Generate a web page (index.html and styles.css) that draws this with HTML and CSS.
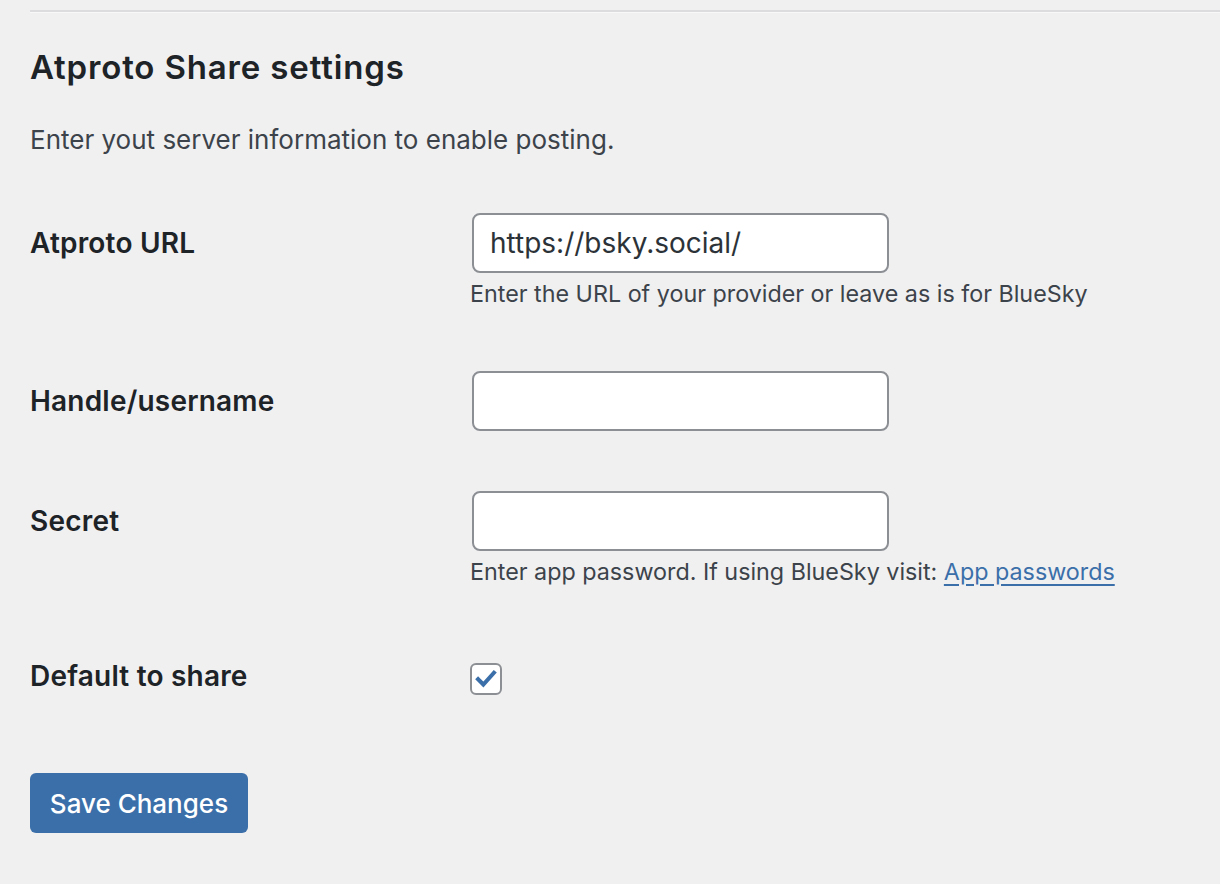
FILE: index.html
```html
<!DOCTYPE html>
<html lang="en">
<head>
<meta charset="utf-8">
<title>Atproto Share settings</title>
<link rel="stylesheet" href="styles.css">
</head>
<body>
<div class="wrap">
  <div class="rule"></div>
  <h2 class="title">Atproto Share settings</h2>
  <p class="intro">Enter yout server information to enable posting.</p>
  <form class="settings">
    <div class="row row-url">
      <label class="row-label" for="url">Atproto URL</label>
      <div class="row-field">
        <input class="text-input" id="url" type="text" value="https://bsky.social/">
        <p class="description">Enter the URL of your provider or leave as is for BlueSky</p>
      </div>
    </div>
    <div class="row row-handle">
      <label class="row-label" for="handle">Handle/username</label>
      <div class="row-field">
        <input class="text-input" id="handle" type="text" value="">
      </div>
    </div>
    <div class="row row-secret">
      <label class="row-label" for="secret">Secret</label>
      <div class="row-field">
        <input class="text-input" id="secret" type="password" value="">
        <p class="description">Enter app password. If using BlueSky visit: <a class="link" href="#">App passwords</a></p>
      </div>
    </div>
    <div class="row row-share">
      <label class="row-label row-label-check" for="share">Default to share</label>
      <div class="row-field">
        <span class="checkbox" id="share" role="checkbox" aria-checked="true">
          <svg viewBox="0 0 20 20" width="24" height="24" aria-hidden="true"><path d="M3.4 10.2 L7.8 14.6 L16.6 4.8" fill="none" stroke="#3b6fa9" stroke-width="3.4" stroke-linecap="square" stroke-linejoin="miter"/></svg>
        </span>
      </div>
    </div>
    <div class="submit-row">
      <button class="button-primary" type="button">Save Changes</button>
    </div>
  </form>
</div>
</body>
</html>
```

FILE: styles.css
```css
html, body {
  margin: 0;
  padding: 0;
  background: #f0f0f1;
}
body {
  font-family: Inter, "Noto Sans", "Liberation Sans", sans-serif;
  color: #3c434a;
}
.wrap {
  padding-left: 30px;
  padding-top: 10px;
}
.rule {
  height: 2px;
  background: #dcdcde;
  border-bottom: 1px solid #f8f8f8;
}
.title {
  margin: 34px 0 0;
  font-size: 33px;
  line-height: 40px;
  letter-spacing: 0.85px;
  font-weight: 600;
  color: #1d2327;
}
.intro {
  margin: 33px 0 0;
  font-size: 26px;
  line-height: 39px;
  color: #3c434a;
}
.settings {
  margin-top: 54px;
}
.row {
  display: flex;
  align-items: flex-start;
}
.row-label {
  width: 440px;
  flex: none;
  padding-top: 10px;
  font-size: 28px;
  line-height: 40px;
  letter-spacing: 0.2px;
  font-weight: 600;
  color: #1d2327;
}
.row-field {
  display: flex;
  flex-direction: column;
  align-items: flex-start;
}
.row-handle, .row-secret {
  margin-top: 60px;
}
.row-share {
  margin-top: 66px;
}
.row-label-check {
  padding-top: 1px;
}
.text-input {
  box-sizing: border-box;
  width: 417px;
  height: 60px;
  margin: 0 0 0 2px;
  padding: 0 16px;
  border: 2px solid #8c8f94;
  border-radius: 8px;
  background: #fff;
  font-family: inherit;
  font-size: 28px;
  color: #2c3338;
  outline: none;
}
.description {
  margin: 4px 0 0;
  font-size: 23.3px;
  line-height: 34px;
  color: #3c434a;
}
.link {
  color: #3b6fa9;
  text-decoration: underline;
  text-underline-offset: 4px;
}
.checkbox {
  box-sizing: border-box;
  margin-top: 8px;
  width: 32px;
  height: 32px;
  border: 2px solid #8c8f94;
  border-radius: 6px;
  background: #fff;
  display: flex;
  align-items: center;
  justify-content: center;
}
.submit-row {
  margin-top: 77px;
}
.button-primary {
  box-sizing: border-box;
  width: 218px;
  height: 60px;
  padding: 0;
  white-space: nowrap;
  border: none;
  border-radius: 6px;
  background: #3b6fa9;
  color: #fff;
  font-family: inherit;
  font-size: 26px;
  font-weight: 500;
  cursor: pointer;
}
```
